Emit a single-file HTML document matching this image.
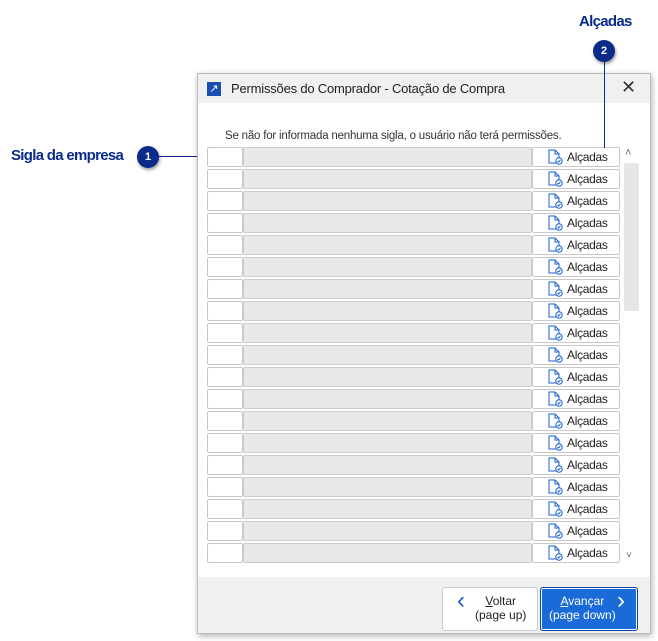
<!DOCTYPE html><html><head><style>
body{margin:0;width:658px;height:641px;background:#fff;position:relative;font-family:"Liberation Sans",sans-serif;overflow:hidden}
.a{position:absolute}
.lbl{color:#0a2a8c;font-weight:bold;font-size:15px;letter-spacing:-0.7px}
.badge{position:absolute;width:22px;height:22px;border-radius:50%;background:#0b2a8a;color:#fff;font-size:11px;font-weight:bold;text-align:center;line-height:22px;box-shadow:1px 2px 3px rgba(0,0,0,.4)}
.dlg{left:197px;top:73px;width:452px;height:559px;background:#fff;border:1px solid #bbb;box-shadow:1px 2px 6px rgba(0,0,0,.3)}
.row{position:absolute;left:9px;height:19px}
.s{position:absolute;left:0;width:34px;height:18px;border:1px solid #c8c8c8;border-radius:2px;background:#fff}
.f{position:absolute;left:36px;width:287px;height:18px;border:1px solid #ccc;border-radius:2px;background:#e8e8e8}
.b{position:absolute;left:325px;width:86px;height:18px;border:1px solid #c8c8c8;border-radius:2px;background:#fff;font-size:12px;color:#222;line-height:18px}
.b svg{position:absolute;left:14px;top:1px}
.b span{position:absolute;left:34px;letter-spacing:-0.3px}
</style></head><body>
<div class="a lbl" style="left:579px;top:13px">Alçadas</div>
<div class="a lbl" style="left:11px;top:147px">Sigla da empresa</div>
<div class="badge" style="left:137px;top:146px">1</div>
<div class="a" style="left:159px;top:156px;width:48px;height:1px;background:#0b2a8a"></div>
<div class="a dlg">
<div class="a" style="left:0;top:0;width:452px;height:29px;background:#f0f0f0"></div>
<div class="a" style="left:9px;top:8px;width:14px;height:14px;background:#1a4fb0;color:#fff;font-size:11px;line-height:14px;text-align:center">↗</div>
<div class="a" style="left:33px;top:7px;font-size:13px;color:#222;letter-spacing:-0.2px">Permissões do Comprador - Cotação de Compra</div>
<div class="a" style="left:423px;top:3px;font-size:18px;color:#333">✕</div>
<div class="a" style="left:27px;top:56px;font-size:11.5px;color:#333;letter-spacing:-0.2px">Se não for informada nenhuma sigla, o usuário não terá permissões.</div>
<div class="a" style="left:427px;top:73px;font-size:11px;color:#666">˄</div>
<div class="a" style="left:426px;top:89px;width:15px;height:148px;background:#e6e6e6;border-radius:2px"></div>
<div class="a" style="left:428px;top:476px;font-size:10px;color:#666">˅</div>
<div id="rows"></div>
<div class="a" style="left:0;top:503px;width:452px;height:56px;background:#f0f0f0"></div>
<div class="a" style="left:244px;top:513px;width:94px;height:42px;background:#fff;border:1px solid #ccc;border-radius:3px;font-size:12px;color:#222;text-align:center;line-height:14px">
<div class="a" style="left:14px;top:6px;color:#1a5fd0;font-size:24px;font-weight:100">‹</div><div style="position:absolute;left:32px;top:6px"><u>V</u>oltar<br>(page up)</div></div>
<div class="a" style="left:342px;top:513px;width:96px;height:42px;background:#1a6ad8;border:1px solid #0a44a8;border-radius:3px;font-size:12px;color:#fff;text-align:center;line-height:14px;box-shadow:inset 0 0 0 1px #fff">
<div style="position:absolute;left:8px;top:6px"><u>A</u>vançar<br>(page down)</div><div class="a" style="left:76px;top:6px;font-size:24px">›</div></div>
</div>
<div class="a" style="left:604px;top:62px;width:1px;height:86px;background:#0b2a8a"></div>
<div class="badge" style="left:593px;top:40px">2</div>
<script>
var h='';for(var i=0;i<19;i++){h+='<div class="row" style="top:'+(73+i*22)+'px"><div class="s"></div><div class="f"></div><div class="b"><svg width="16" height="16" viewBox="0 0 16 16"><path d="M2 1h6l4 4v9H2z" fill="none" stroke="#1a5fd0"/><path d="M8 1v4h4" fill="none" stroke="#1a5fd0"/><circle cx="12" cy="12" r="3.2" fill="#fff" stroke="#1a5fd0"/><path d="M10.5 12l1 1 2-2" fill="none" stroke="#1a5fd0"/></svg><span>Alçadas</span></div></div>'}
document.getElementById('rows').innerHTML=h;
</script>
</body></html>
